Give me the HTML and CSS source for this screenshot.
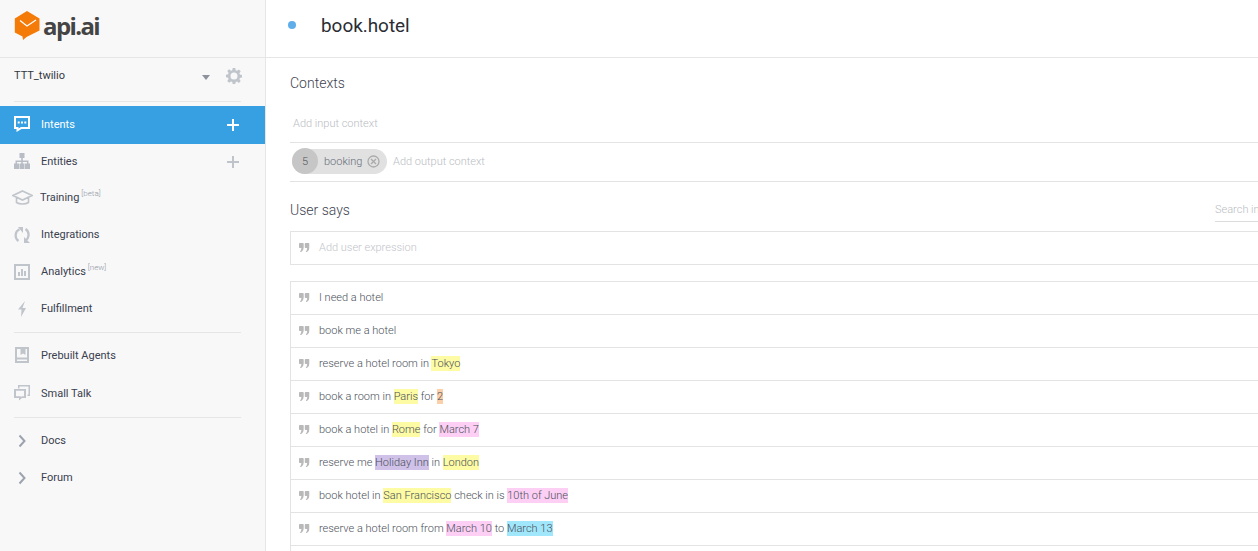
FILE: index.html
```html
<!DOCTYPE html>
<html lang="en">
<head>
<meta charset="utf-8">
<title>book.hotel</title>
<link rel="stylesheet" href="styles.css">
</head>
<body>
<svg class="defs" width="0" height="0"><symbol id="q" viewBox="0 0 10.500 9"><path fill="#b9b9b9" d="M0 .8Q0 0 .8 0H3.900Q4.700 0 4.700 .8V4.500Q4.700 7.500 2.200 9H1Q2.200 7.500 2.400 5H.8Q0 5 0 4.200ZM5.800 .8Q5.800 0 6.600 0H9.700Q10.500 0 10.500 .8V4.500Q10.500 7.500 8 9H6.800Q8 7.500 8.200 5H6.600Q5.800 5 5.800 4.200Z"/></symbol></svg>
<div class="app">
  <aside class="sidebar">
    <div class="logo">
      <svg class="logo-mark" width="26" height="30" viewBox="0 0 26 30"><path fill="#f47b08" d="M13 0 25.500 7.500V19.500L12.500 26 9 29 8.500 25.500.8 21.500V7.500Z"/><path fill="none" stroke="#fff" stroke-width="1.300" d="M6 9.500 13 15 22 9"/></svg>
      <span class="logo-text">api.ai</span>
    </div>
    <div class="agent">
      <span class="agent-name">TTT_twilio</span>
      <span class="caret"></span>
      <svg class="gear" width="16" height="16" viewBox="0 0 16 16"><path fill="#c0c4cb" fill-rule="evenodd" d="M6.700 0h2.600l.4 2.200 1.300.6L12.900 1.500l1.800 1.800-1.300 1.900.5 1.300 2.100.4v2.600l-2.100.4-.5 1.300 1.300 1.900-1.800 1.800-1.900-1.300-1.300.5L9.300 16H6.700l-.4-2.100-1.300-.5-1.900 1.300-1.800-1.800 1.300-1.900-.5-1.300L0 9.300V6.700l2.100-.4.500-1.300-1.300-1.900 1.800-1.800L5 2.800l1.300-.6ZM8 4.500a3.500 3.500 0 1 0 0 7 3.500 3.500 0 0 0 0-7Z"/></svg>
    </div>
    <nav class="nav">
      <div class="nav-group">
        <a class="nav-item nav-active">
          <svg class="nav-icon" width="16" height="16" viewBox="0 0 16 16"><path fill="#fff" fill-rule="evenodd" d="M0 0h16v13H7.500L2.500 16V13H0ZM2 2v9h2.500v1.500L7 11h7V2Z"/><path fill="#fff" d="M3.700 5.500h2v2h-2ZM7 5.500h2v2H7ZM10.300 5.500h2v2h-2Z"/></svg>
          <span class="nav-label">Intents</span>
          <span class="plus plus-white"></span>
        </a>
        <a class="nav-item nav-item-short">
          <svg class="nav-icon" width="16" height="16" viewBox="0 0 16 16"><path fill="#b8bcc5" d="M5.500 0h5v5H8.800v2.500h5.700v3H16V16h-5v-5.500h2V9H8.800v1.500h1.700V16h-5v-5.500h1.700V9H3v1.500h2V16H0v-5.500h1.500v-3h5.700V5H5.500Z"/></svg>
          <span class="nav-label">Entities</span>
          <span class="plus plus-grey"></span>
        </a>
        <a class="nav-item nav-item-training">
          <svg class="nav-icon nav-icon-wide" width="21" height="15" viewBox="0 0 21 15"><path fill="none" stroke="#c0c4cb" stroke-width="1.600" d="M10.500 1 20 5.500 10.500 10 1 5.500ZM4.500 8v4.500c3 2 9 2 12 0V8"/></svg>
          <span class="nav-label">Training</span><sup class="tag">[beta]</sup>
        </a>
        <a class="nav-item">
          <svg class="nav-icon" width="16" height="16" viewBox="0 0 16 16"><path fill="none" stroke="#c0c4cb" stroke-width="2.200" d="M4.500 14A6.800 6.800 0 0 1 5.500 2.300M11.500 2A6.800 6.800 0 0 1 11 13.700"/><path fill="#c0c4cb" d="M4 0h5v6ZM16 16h-6v-6Z"/></svg>
          <span class="nav-label">Integrations</span>
        </a>
        <a class="nav-item">
          <svg class="nav-icon" width="16" height="16" viewBox="0 0 16 16"><path fill="#c0c4cb" fill-rule="evenodd" d="M0 0h16v16H0ZM2 2v12h12V2Z"/><path fill="#c0c4cb" d="M4 8h2v4H4ZM7 5h2v7H7ZM10 7h2v5h-2Z"/></svg>
          <span class="nav-label">Analytics</span><sup class="tag">[new]</sup>
        </a>
        <a class="nav-item">
          <svg class="nav-icon" width="16" height="16" viewBox="0 0 16 16"><path fill="#c0c4cb" d="M11 0 4 8.500h3.500L7 16l5-9H8.500Z"/></svg>
          <span class="nav-label">Fulfillment</span>
        </a>
      </div>
      <div class="nav-group nav-group-mid">
        <a class="nav-item">
          <svg class="nav-icon" width="16" height="16" viewBox="0 0 16 16"><path fill="#c0c4cb" fill-rule="evenodd" d="M1 0h14v16H1ZM3 2v8.500h10V2h-1.500v6L9 6.500 6.500 8V2ZM3 12.500V14h10v-1.500Z"/></svg>
          <span class="nav-label">Prebuilt Agents</span>
        </a>
        <a class="nav-item">
          <svg class="nav-icon" width="16" height="16" viewBox="0 0 16 16"><path fill="#c0c4cb" fill-rule="evenodd" d="M4 0h12v11h-2.500V9.500h1V1.500H5.500V3.500H4ZM0 4h12v9H8L5 15.500V13H0ZM2 5.800v5.400h4.800v1l1-1H10V5.800Z"/></svg>
          <span class="nav-label">Small Talk</span>
        </a>
      </div>
      <div class="nav-group nav-group-last">
        <a class="nav-item">
          <svg class="nav-icon" width="16" height="16" viewBox="0 0 16 16"><path fill="none" stroke="#9ca3af" stroke-width="2" d="M5.500 2.500 10.500 8l-5 5.500"/></svg>
          <span class="nav-label">Docs</span>
        </a>
        <a class="nav-item">
          <svg class="nav-icon" width="16" height="16" viewBox="0 0 16 16"><path fill="none" stroke="#9ca3af" stroke-width="2" d="M5.500 2.500 10.500 8l-5 5.500"/></svg>
          <span class="nav-label">Forum</span>
        </a>
      </div>
    </nav>
  </aside>
  <main class="main">
    <header class="header">
      <span class="dot"></span>
      <h1 class="title">book.hotel</h1>
    </header>
    <div class="content">
      <section class="contexts">
        <h2 class="section-title">Contexts</h2>
        <div class="context-row context-input">Add input context</div>
        <div class="context-row context-output">
          <span class="chip"><span class="chip-count">5</span><span class="chip-name">booking</span>
            <svg class="chip-x" width="13" height="13" viewBox="0 0 13 13"><circle cx="6.500" cy="6.500" r="5.500" fill="none" stroke="#aaa" stroke-width="1.300"/><path stroke="#aaa" stroke-width="1.300" d="M4 4l5 5M9 4l-5 5"/></svg>
          </span>
          <span class="placeholder">Add output context</span>
        </div>
      </section>
      <section class="says">
        <div class="says-head">
          <h2 class="section-title">User says</h2>
          <span class="search">Search in</span>
        </div>
        <div class="expr-box expr-add">
          <svg class="quote"><use href="#q"/></svg><span class="placeholder placeholder-add">Add user expression</span>
        </div>
        <div class="expr-box expr-list">
          <div class="expr"><svg class="quote"><use href="#q"/></svg><span>I need a hotel</span></div>
          <div class="expr"><svg class="quote"><use href="#q"/></svg><span>book me a hotel</span></div>
          <div class="expr"><svg class="quote"><use href="#q"/></svg><span>reserve a hotel room in <mark class="yellow">Tokyo</mark></span></div>
          <div class="expr"><svg class="quote"><use href="#q"/></svg><span>book a room in <mark class="yellow">Paris</mark> for <mark class="orange">2</mark></span></div>
          <div class="expr"><svg class="quote"><use href="#q"/></svg><span>book a hotel in <mark class="yellow">Rome</mark> for <mark class="pink">March 7</mark></span></div>
          <div class="expr"><svg class="quote"><use href="#q"/></svg><span>reserve me <mark class="purple">Holiday Inn</mark> in <mark class="yellow">London</mark></span></div>
          <div class="expr"><svg class="quote"><use href="#q"/></svg><span>book hotel in <mark class="yellow">San Francisco</mark> check in is <mark class="pink">10th of June</mark></span></div>
          <div class="expr"><svg class="quote"><use href="#q"/></svg><span>reserve a hotel room from <mark class="pink">March 10</mark> to <mark class="cyan">March 13</mark></span></div>
          <div class="expr"></div>
        </div>
      </section>
    </div>
  </main>
</div>
</body>
</html>
```
FILE: styles.css
```css
* { box-sizing: border-box; }
html, body { margin: 0; height: 100%; overflow: hidden; background: #fff; }
body { font-family: Roboto, sans-serif; color: #4a4f59; }
h1, h2 { margin: 0; font-weight: 400; }
.defs { display: block; }

.app { display: flex; width: 1258px; height: 551px; overflow: hidden; }

.sidebar { flex: 0 0 266px; background: #f8f8f8; border-right: 1px solid #e6e6e6; }
.logo { display: flex; align-items: center; gap: 3px; height: 58px; padding: 0 0 5px 14px; border-bottom: 1px solid #e6e6e6; }
.logo-text { font: 700 24px/1 "Open Sans", sans-serif; color: #444; letter-spacing: -1.600px; }
.agent { display: flex; align-items: center; height: 43px; margin: 0 23px 0 14px; padding-bottom: 7px; font-size: 11px; color: #333740; }
.agent-name { flex: 1; padding-bottom: 1px; }
.caret { width: 0; height: 0; border: 4px solid transparent; border-top: 5px solid #8d929c; border-bottom: 0; margin: 3px 16px 0 0; }

.nav-group { padding: 0 0 4px; }
.nav-group::before { content: ""; display: block; height: 1px; margin: 0 24px 4px 14px; background: #e6e6e6; }
.nav-group-last::before { margin-bottom: 5px; }
.nav-item { display: flex; align-items: center; height: 37px; padding: 0 24px 2px 14px; font-size: 11px; color: #39404f; }
.nav-item-short { height: 36px; }
.nav-group-mid .nav-item { height: 38px; }
.nav-item-training { padding-left: 12px; }
.nav-icon { flex: none; margin-right: 11px; }
.nav-icon-wide { margin-right: 7px; }
.nav-label { line-height: 1; }
.nav-active { height: 38px; background: #36a0e3; color: #fff; }
.tag { margin: 0 0 7px 2px; font-size: 8px; font-weight: 300; line-height: 1; color: #8f95a6; }

.plus { position: relative; width: 12px; height: 12px; margin-left: auto; margin-right: 2px; margin-top: 2px; }
.plus::before, .plus::after { content: ""; position: absolute; background: currentColor; }
.plus::before { left: 0; right: 0; top: 5px; height: 2px; }
.plus::after { top: 0; bottom: 0; left: 5px; width: 2px; }
.plus-white { color: #fff; }
.plus-grey { color: #bfc3ca; }

.main { flex: 1; min-width: 0; }
.header { display: flex; align-items: center; height: 58px; padding: 0 0 7px 22px; border-bottom: 1px solid #e6e6e6; }
.dot { width: 8px; height: 8px; border-radius: 50%; background: #5fade9; margin-right: 25px; }
.title { font-size: 18.900px; color: #2a2d33; }

.content { padding-left: 24px; }
.section-title { font-size: 14px; font-weight: 300; line-height: 16px; color: #3e4350; }
.contexts { padding-top: 17px; }
.context-row { display: flex; align-items: center; border-bottom: 1px solid #e3e3e3; font-size: 11px; font-weight: 300; color: #b9bcc2; }
.context-input { height: 35px; margin-top: 17px; padding: 0 0 3px 3px; }
.context-output { height: 39px; padding: 0 0 2px 2px; }
.placeholder { font-weight: 300; color: #b9bcc2; }
.chip { display: flex; align-items: center; height: 25px; width: 95px; border-radius: 13px; background: #e1e1e1; margin-right: 6px; color: #666c78; }
.chip-count { display: flex; align-items: center; justify-content: center; width: 26px; height: 26px; border-radius: 50%; background: #c6c6c6; color: #555; flex: none; }
.chip-name { margin-left: 6px; }
.chip-x { margin-left: 5px; }

.says { padding-top: 20px; }
.says-head { display: flex; justify-content: space-between; align-items: flex-start; height: 29px; }
.search { width: 43px; height: 20px; overflow: hidden; white-space: nowrap; border-bottom: 1px solid #dcdcdc; font-size: 11px; font-weight: 300; line-height: 15px; color: #b9bcc2; }
.expr-box { border: 1px solid #e3e3e3; border-right: 0; }
.expr-add { display: flex; align-items: center; height: 34px; margin-bottom: 16px; padding-bottom: 2px; font-size: 11px; }
.placeholder-add { color: #c2c4c9; }
.expr-list { border-bottom: 0; }
.expr { display: flex; align-items: center; height: 33px; padding-bottom: 2px; border-bottom: 1px solid #e3e3e3; font-size: 11px; font-weight: 300; color: #4a4f59; white-space: pre; }
.quote { flex: none; width: 10.500px; height: 9px; margin: 0 9.500px 0 8px; }
mark { color: inherit; padding: 1px 0; }
.yellow { background: #fdfba3; }
.orange { background: #fbcfa9; }
.pink { background: #fdcff5; }
.purple { background: #cfc1e8; }
.cyan { background: #a1e7fb; }
```
